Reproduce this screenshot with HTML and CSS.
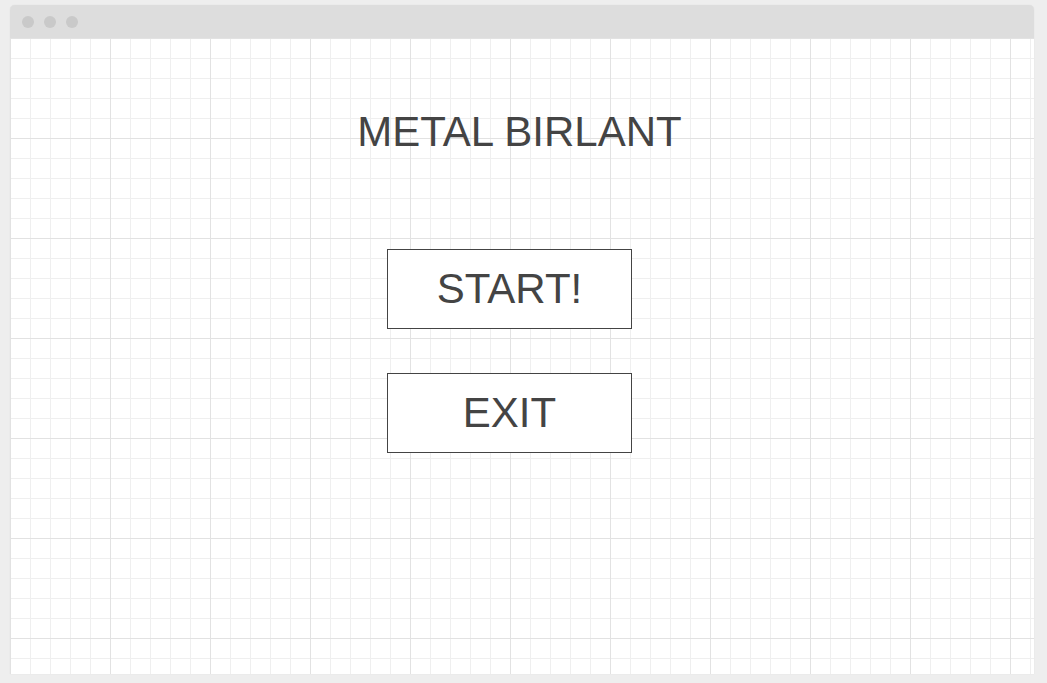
FILE: index.html
```html
<!DOCTYPE html>
<html>
<head>
<meta charset="utf-8">
<link rel="stylesheet" href="styles.css">
</head>
<body>
<div class="window">
  <div class="titlebar">
    <span class="dot"></span><span class="dot"></span><span class="dot"></span>
  </div>
  <main class="canvas">
    <h1 class="title">METAL BIRLANT</h1>
    <div class="buttons">
      <div class="btn">START!</div>
      <div class="btn">EXIT</div>
    </div>
  </main>
</div>
</body>
</html>
```
FILE: styles.css
```css
html, body {
  margin: 0;
  padding: 0;
  background: #eeeeee;
  font-family: "Liberation Sans", Arial, sans-serif;
}
body {
  padding: 5px 13px 9px 10px;
  height: 683px;
  box-sizing: border-box;
}
.window {
  width: 1024px;
  height: 669px;
  display: flex;
  flex-direction: column;
  border-radius: 5px 5px 0 0;
  overflow: hidden;
  box-shadow: 0 0 1px rgba(0,0,0,0.15);
}
.titlebar {
  height: 33px;
  background: #dddddd;
  display: flex;
  align-items: center;
  gap: 10px;
  padding-left: 12px;
  flex-shrink: 0;
}
.dot {
  width: 12px;
  height: 12px;
  border-radius: 50%;
  background: #c9c9c9;
}
.canvas {
  flex: 1;
  background-color: #ffffff;
  background-image:
    linear-gradient(to right, #e2e2e2 1px, transparent 1px),
    linear-gradient(to bottom, #e2e2e2 1px, transparent 1px),
    linear-gradient(to right, #efefef 1px, transparent 1px),
    linear-gradient(to bottom, #efefef 1px, transparent 1px);
  background-size: 100px 100px, 100px 100px, 20px 20px, 20px 20px;
  padding-top: 70px;
  display: flex;
  flex-direction: column;
}
.title {
  margin: 0;
  font-weight: normal;
  font-size: 42px;
  line-height: 48px;
  color: #444444;
  text-align: center;
  padding-right: 5px;
}
.buttons {
  display: flex;
  flex-direction: column;
  gap: 44px;
  margin-top: 93px;
  padding-left: 377px;
}
.btn {
  width: 245px;
  height: 80px;
  box-sizing: border-box;
  border: 1px solid #444444;
  background: #ffffff;
  color: #444444;
  font-size: 42px;
  line-height: 78px;
  text-align: center;
}
```
